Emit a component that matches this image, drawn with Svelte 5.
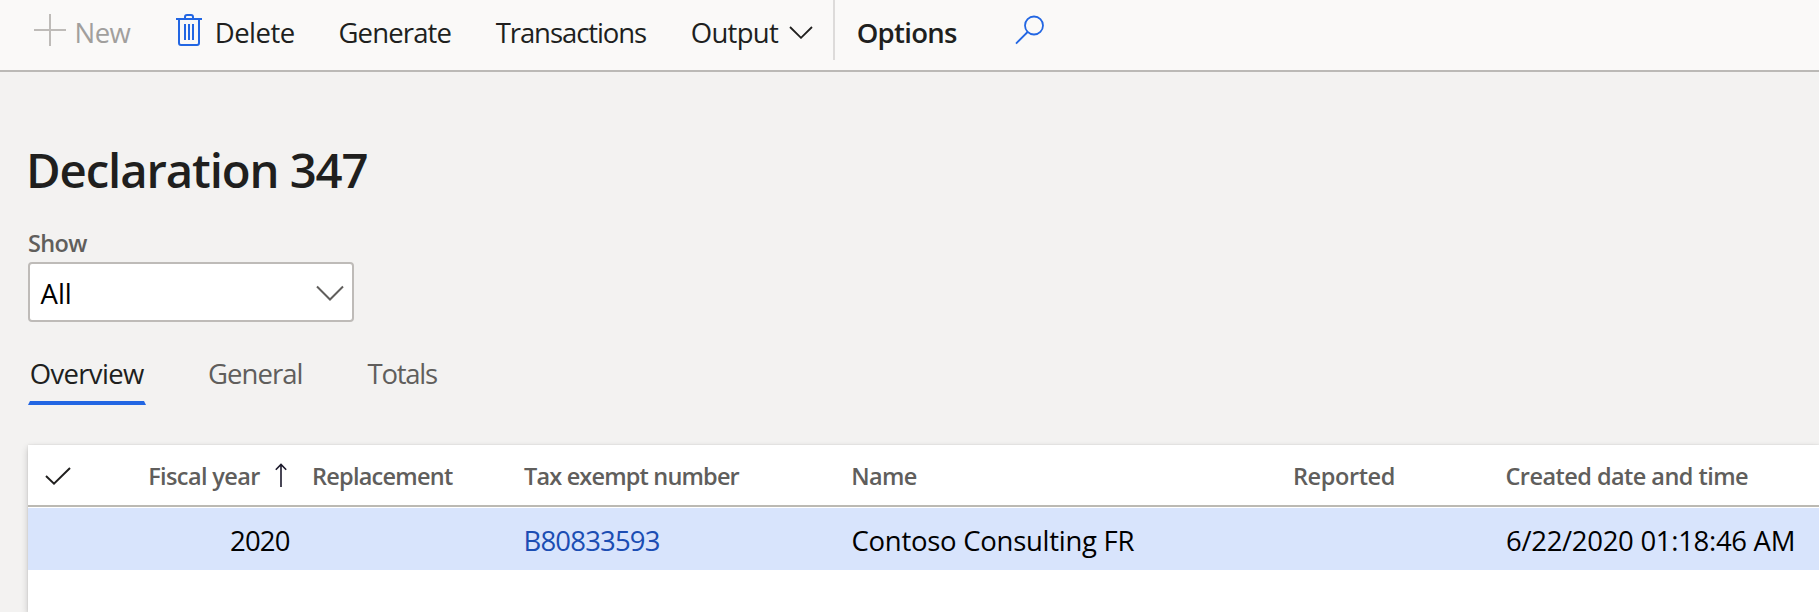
<script>
  const tabs = [
    { label: 'Overview', key: 'overview' },
    { label: 'General', key: 'general' },
    { label: 'Totals', key: 'totals' }
  ];
  let active = $state('overview');
  const row = {
    year: '2020',
    tax: 'B80833593',
    name: 'Contoso Consulting FR',
    created: '6/22/2020 01:18:46 AM'
  };
</script>

<div class="page">
  <header class="toolbar">
    <button class="cmd new" disabled>
      <svg width="32" height="32" viewBox="0 0 32 32"><path d="M16 0v32M0 16h32" /></svg>
      <span>New</span>
    </button>
    <button class="cmd delete">
      <svg width="26" height="32" viewBox="0 0 26 32">
        <path d="M0 5h26M9 5V3q0-2 2-2h4q2 0 2 2v2M3 5v24q0 2 2 2h16q2 0 2-2V5M9 10v16M13 10v16M17 10v16" />
      </svg>
      <span>Delete</span>
    </button>
    <button class="cmd generate"><span>Generate</span></button>
    <button class="cmd transactions"><span>Transactions</span></button>
    <button class="cmd output">
      <span>Output</span>
      <svg width="24" height="13" viewBox="0 0 24 13"><path d="M1 1l11 10.8L23 1" /></svg>
    </button>
    <div class="separator"></div>
    <button class="cmd options"><span>Options</span></button>
    <button class="cmd search" aria-label="Search">
      <svg width="30" height="30" viewBox="0 0 30 30"><circle cx="19" cy="10.5" r="9" /><path d="M12.6 17L1 28.6" /></svg>
    </button>
  </header>

  <main>
    <h1>Declaration 347</h1>
    <label for="show">Show</label>
    <button id="show" class="select">
      <span>All</span>
      <svg width="28" height="17" viewBox="0 0 28 17"><path d="M1 1.5l13 13 13-13" /></svg>
    </button>

    <nav class="tabs">
      {#each tabs as tab}
        <button class="tab {tab.key}" class:active={active === tab.key} onclick={() => (active = tab.key)}>{tab.label}</button>
      {/each}
    </nav>

    <section class="grid">
      <div class="row head">
        <div class="check">
          <svg width="26" height="18" viewBox="0 0 26 18"><path d="M1 9l8 7.6L25 1" /></svg>
        </div>
        <div class="year">
          <span>Fiscal year</span>
          <svg width="12" height="25" viewBox="0 0 12 25"><path d="M6 24V1.5M.8 6.7L6 1.4l5.2 5.3" /></svg>
        </div>
        <div class="repl">Replacement</div>
        <div class="tax">Tax exempt number</div>
        <div class="name">Name</div>
        <div class="reported">Reported</div>
        <div class="created">Created date and time</div>
      </div>
      <div class="row data">
        <div></div>
        <div class="year">{row.year}</div>
        <div></div>
        <div class="tax">{row.tax}</div>
        <div class="name">{row.name}</div>
        <div></div>
        <div class="created">{row.created}</div>
      </div>
    </section>
  </main>
</div>

<style>
  :global(body) { margin: 0; overflow: hidden; }
  .page {
    width: 1819px;
    height: 612px;
    display: flex;
    flex-direction: column;
    overflow: hidden;
    background: #f3f2f1;
    color: #201f1e;
    font: 400 27.5px "Open Sans", "Noto Sans", sans-serif;
  }
  .page, .page * { box-sizing: border-box; }
  button {
    margin: 0;
    padding: 0;
    border: 0;
    background: none;
    color: inherit;
    font: inherit;
    text-align: left;
    white-space: nowrap;
  }
  svg { display: block; flex: none; fill: none; stroke: currentColor; stroke-width: 2; }

  .toolbar {
    flex: none;
    height: 72px;
    display: grid;
    grid-template-columns: 142px 162.5px 157.2px 195px 142.3px 23.7px 158.3px 60px;
    padding-left: 34px;
    background: #faf9f8;
    border-bottom: 2px solid #bbb9b6;
  }
  .cmd { display: flex; align-items: flex-start; line-height: 65px; }
  .new { color: #a19f9d; letter-spacing: -0.57px; }
  .new svg { margin: 14px 8.5px 0 0; color: #bebbb8; }
  .delete { letter-spacing: -0.5px; }
  .delete svg { margin: 14px 12.7px 0 0; color: #2266e3; }
  .generate { letter-spacing: -0.87px; }
  .transactions { letter-spacing: -1.08px; }
  .output { letter-spacing: -0.69px; }
  .output svg { margin: 25.5px 0 0 11px; stroke-width: 1.8; }
  .separator { width: 2px; height: 60px; background: #dddbda; }
  .options { font-weight: 600; letter-spacing: -0.71px; }
  .search svg { margin-top: 15px; color: #2266e3; stroke-width: 1.8; }

  main { flex: 1; display: flex; flex-direction: column; padding: 68px 0 0 28px; }
  h1 { margin: 0 0 28px -2px; font-size: 47.3px; font-weight: 600; line-height: 60px; letter-spacing: -1.11px; }
  label { color: #605e5c; font-size: 23.5px; font-weight: 600; line-height: 30px; letter-spacing: -0.63px; margin-bottom: 4px; }
  .select {
    width: 326px;
    height: 60px;
    display: flex;
    align-items: center;
    justify-content: space-between;
    padding: 3px 8px 0 10.5px;
    border: 2px solid #bebbb8;
    border-radius: 4px;
    background: #fff;
    color: #000;
    letter-spacing: 0;
  }
  .select svg { color: #605e5c; margin-bottom: 1px; }

  .tabs { display: flex; height: 52px; margin: 31px 0 40px; }
  .tab { display: flex; align-items: flex-start; position: relative; line-height: 41px; height: 52px; color: #605e5c; }
  .overview { width: 118px; padding-left: 1.7px; letter-spacing: -0.66px; margin-right: 62px; }
  .general { width: 100px; letter-spacing: -0.96px; margin-right: 59.5px; }
  .totals { letter-spacing: -1.24px; }
  .active { color: #201f1e; }
  .active::after {
    content: "";
    position: absolute;
    left: 0;
    right: 0;
    bottom: 0;
    height: 4px;
    background: #2266e3;
    clip-path: polygon(2px 0, calc(100% - 2px) 0, 100% 100%, 0 100%);
  }

  .grid { flex: 1; background: #fff; box-shadow: 0 3px 7px rgba(0, 0, 0, 0.19), 0 0 2px rgba(0, 0, 0, 0.1); }
  .row { display: grid; grid-template-columns: 119.5px 164.5px 213px 327px 442px 213px 1fr; white-space: nowrap; }
  .head {
    height: 62px;
    line-height: 62px;
    border-bottom: 2px solid #bbb9b3;
    color: #605e5c;
    font-size: 23.5px;
    font-weight: 600;
  }
  .check svg { margin: 21.5px 0 0 17px; color: #201f1e; }
  .head .year { display: flex; letter-spacing: -0.62px; margin-left: 0.7px; }
  .head .year svg { margin: 17.5px 0 0 15px; color: #1c1a2c; stroke-width: 1.6; }
  .repl { letter-spacing: -0.75px; }
  .head .tax { letter-spacing: -0.83px; margin-left: -1px; }
  .head .name { letter-spacing: -0.65px; margin-left: -0.7px; }
  .reported { letter-spacing: -0.4px; margin-left: -1px; }
  .head .created { letter-spacing: -0.55px; margin-left: -1.5px; }
  .data {
    height: 62px;
    margin-top: 1px;
    padding-top: 1px;
    line-height: 63px;
    background: #d8e4fc;
    color: #000;
  }
  .data .year { justify-self: end; margin-right: 22.2px; letter-spacing: -0.75px; }
  .data .tax { color: #1b4db3; letter-spacing: -0.82px; margin-left: -1.5px; }
  .data .name { letter-spacing: -0.27px; margin-left: -0.5px; }
  .data .created { letter-spacing: -0.3px; margin-left: -1px; }
</style>
